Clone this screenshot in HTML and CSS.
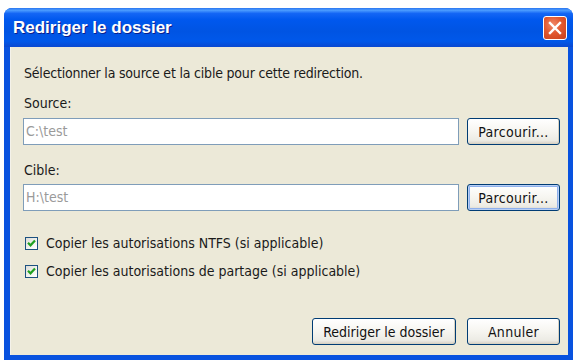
FILE: index.html
```html
<!DOCTYPE html>
<html lang="fr">
<head>
<meta charset="utf-8">
<title>Rediriger le dossier</title>
<link rel="stylesheet" href="styles.css">
</head>
<body>
<div class="window">
  <div class="titlebar">
    <span class="title">Rediriger le dossier</span>
    <span class="close">
      <svg width="14" height="14" viewBox="0 0 14 14"><path d="M2 2 L12 12 M12 2 L2 12" stroke="#fff" stroke-width="2.4" stroke-linecap="square"/></svg>
    </span>
  </div>
  <div class="client">
    <div class="intro">Sélectionner la source et la cible pour cette redirection.</div>
    <div class="label label-source">Source:</div>
    <div class="field-row">
      <div class="input">C:\test</div>
      <button class="btn">Parcourir...</button>
    </div>
    <div class="label label-cible">Cible:</div>
    <div class="field-row">
      <div class="input">H:\test</div>
      <button class="btn btn-default">Parcourir...</button>
    </div>
    <label class="check check-first">
      <span class="box"><svg width="9" height="8" viewBox="0 0 9 8"><path d="M1 3.8 L3.5 6.3 L8 1.5" fill="none" stroke="#21a121" stroke-width="2.2"/></svg></span>
      <span>Copier les autorisations NTFS (si applicable)</span>
    </label>
    <label class="check">
      <span class="box"><svg width="9" height="8" viewBox="0 0 9 8"><path d="M1 3.8 L3.5 6.3 L8 1.5" fill="none" stroke="#21a121" stroke-width="2.2"/></svg></span>
      <span>Copier les autorisations de partage (si applicable)</span>
    </label>
    <div class="actions">
      <button class="btn btn-wide">Rediriger le dossier</button>
      <button class="btn">Annuler</button>
    </div>
  </div>
</div>
</body>
</html>
```
FILE: styles.css
```css
html, body {
  margin: 0;
  padding: 0;
  background: #ffffff;
}
body {
  width: 576px;
  height: 362px;
  overflow: hidden;
  font-family: "DejaVu Sans Condensed", "DejaVu Sans", sans-serif;
  font-size: 14px;
  color: #1a1a1a;
}
.window {
  margin: 8px 3px 0 4px;
  height: 352px;
  display: flex;
  flex-direction: column;
  border-radius: 8px 8px 0 0;
  background: #0852df;
  overflow: hidden;
}
.titlebar {
  height: 39px;
  flex: none;
  display: flex;
  align-items: center;
  justify-content: space-between;
  padding: 0 6px 0 9px;
  background: linear-gradient(to bottom, #2a76f0 0%, #4a9bff 6%, #1466f5 14%, #0058ee 30%, #0054e3 60%, #0058ea 85%, #0a48d0 100%);
}
.title {
  color: #ffffff;
  font-family: "Liberation Sans", Arial, sans-serif;
  font-weight: bold;
  font-size: 17px;
  text-shadow: 1px 1px 0 #0a1e8c;
  margin-top: 1px;
}
.close {
  width: 22px;
  height: 22px;
  border: 1px solid #ffffff;
  border-radius: 3px;
  background: radial-gradient(circle at 40% 35%, #f08a6a 0%, #e2582f 45%, #c8401c 100%);
  display: flex;
  align-items: center;
  justify-content: center;
  margin-top: 1px;
}
.client {
  flex: 1;
  margin: 0 5px 5px 6px;
  background: #ece9d8;
  border-left: 1px solid #f4f2ea;
  display: flex;
  flex-direction: column;
  padding: 18px 8px 0 13px;
}
.intro, .label {
  line-height: 16px;
  height: 16px;
}
.intro {
  letter-spacing: -0.2px;
}
.label-source {
  margin-top: 14px;
  margin-bottom: 7px;
}
.label-cible {
  margin-top: 17px;
  margin-bottom: 6px;
}
.field-row {
  display: flex;
  align-items: center;
  gap: 8px;
  margin-left: -1px;
}
.input {
  flex: 1;
  box-sizing: border-box;
  height: 27px;
  border: 1px solid #7f9db9;
  background: #ffffff;
  color: #9a9a9a;
  line-height: 25px;
  padding-left: 2px;
}
.btn {
  font-family: inherit;
  font-size: 14px;
  letter-spacing: 0.3px;
  color: #111;
  width: 93px;
  height: 27px;
  box-sizing: border-box;
  border: 1px solid #003c74;
  border-radius: 3px;
  background: linear-gradient(to bottom, #ffffff 0%, #f6f5f0 50%, #ecebe4 85%, #d6d0c5 100%);
  padding: 0;
  box-shadow: inset -1px -1px 0 #d8d2c2;
}
.btn-default {
  box-shadow: inset 0 0 0 1px #b8cff5, inset 0 0 0 2px #8eb0ec;
}
.check {
  display: flex;
  align-items: center;
  gap: 8px;
  height: 16px;
  line-height: 16px;
  margin-left: 1px;
}
.check-first {
  margin-top: 24px;
  margin-bottom: 12px;
}
.box {
  width: 13px;
  height: 13px;
  box-sizing: border-box;
  border: 1px solid #1c5180;
  background: linear-gradient(135deg, #dcdcd7 0%, #f4f4f0 60%, #ffffff 100%);
  display: flex;
  align-items: center;
  justify-content: center;
}
.actions {
  margin-top: 39px;
  display: flex;
  justify-content: flex-end;
  gap: 11px;
}
.btn-wide {
  width: 144px;
  letter-spacing: 0;
}
```
